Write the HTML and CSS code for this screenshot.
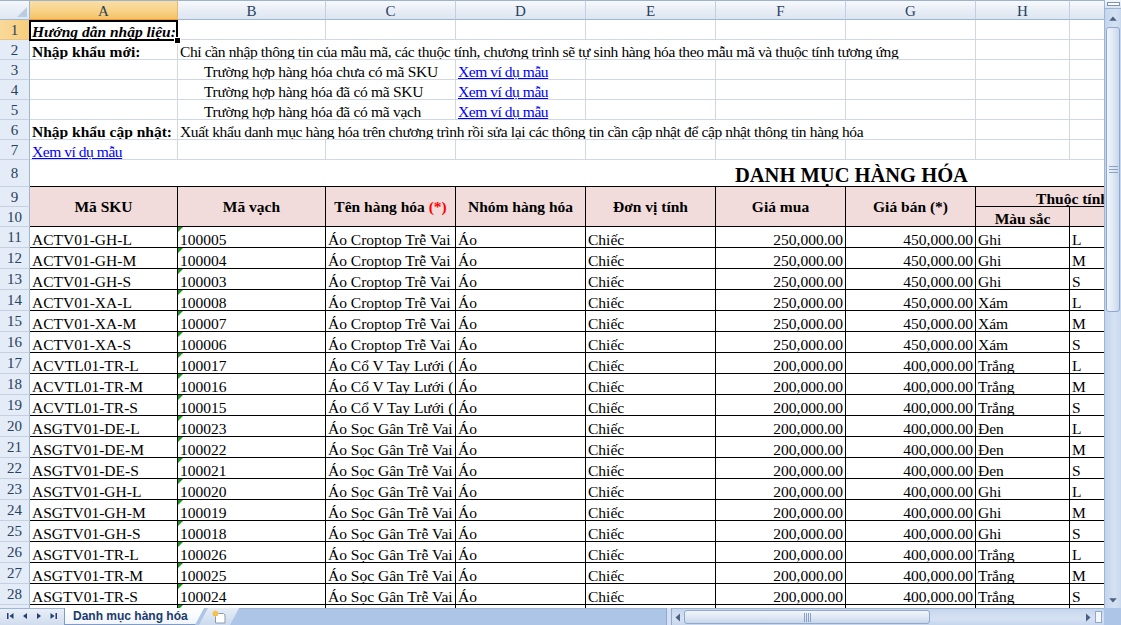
FILE: index.html
```html
<!DOCTYPE html>
<html lang="vi">
<head>
<meta charset="utf-8">
<title>Danh mục hàng hóa</title>
<link rel="stylesheet" href="styles.css">
</head>
<body>
<div class="app">
  <div class="viewport">
    <div class="sheet">
      <!-- column headers -->
      <div class="corner"><svg width="12" height="12" viewBox="0 0 12 12"><polygon points="12,2 12,12 2,12" fill="#bccbdf"/></svg></div>
      <div class="hd sel">A</div><div class="hd">B</div><div class="hd">C</div><div class="hd">D</div><div class="hd">E</div><div class="hd">F</div><div class="hd">G</div><div class="hd">H</div><div class="hd">I</div>

      <!-- row 1 -->
      <div class="rh sel">1</div><div class="c a1 bi">Hướng dẫn nhập liệu:</div><div class="c"></div><div class="c"></div><div class="c"></div><div class="c"></div><div class="c"></div><div class="c"></div><div class="c"></div><div class="c"></div>
      <!-- row 2 -->
      <div class="rh">2</div><div class="c b">Nhập khẩu mới:</div><div class="c span6 sq">Chỉ cần nhập thông tin của mẫu mã, các thuộc tính, chương trình sẽ tự sinh hàng hóa theo mẫu mã và thuộc tính tương ứng</div><div class="c"></div><div class="c"></div>
      <!-- row 3 -->
      <div class="rh">3</div><div class="c"></div><div class="c span2 ind">Trường hợp hàng hóa chưa có mã SKU</div><div class="c"><span class="link">Xem ví dụ mẫu</span></div><div class="c"></div><div class="c"></div><div class="c"></div><div class="c"></div><div class="c"></div>
      <!-- row 4 -->
      <div class="rh">4</div><div class="c"></div><div class="c span2 ind">Trường hợp hàng hóa đã có mã SKU</div><div class="c"><span class="link">Xem ví dụ mẫu</span></div><div class="c"></div><div class="c"></div><div class="c"></div><div class="c"></div><div class="c"></div>
      <!-- row 5 -->
      <div class="rh">5</div><div class="c"></div><div class="c span2 ind">Trường hợp hàng hóa đã có mã vạch</div><div class="c"><span class="link">Xem ví dụ mẫu</span></div><div class="c"></div><div class="c"></div><div class="c"></div><div class="c"></div><div class="c"></div>
      <!-- row 6 -->
      <div class="rh">6</div><div class="c b">Nhập khẩu cập nhật:</div><div class="c span6 sq">Xuất khẩu danh mục hàng hóa trên chương trình rồi sửa lại các thông tin cần cập nhật để cập nhật thông tin hàng hóa</div><div class="c"></div><div class="c"></div>
      <!-- row 7 -->
      <div class="rh">7</div><div class="c"><span class="link">Xem ví dụ mẫu</span></div><div class="c"></div><div class="c"></div><div class="c"></div><div class="c"></div><div class="c"></div><div class="c"></div><div class="c"></div><div class="c"></div>
      <!-- row 8 -->
      <div class="rh">8</div><div class="c title">DANH MỤC HÀNG HÓA</div>
      <!-- rows 9-10 -->
      <div class="rh">9</div>
      <div class="c th tall">Mã SKU</div>
      <div class="c th tall">Mã vạch</div>
      <div class="c th tall">Tên hàng hóa&nbsp;<span class="req">(*)</span></div>
      <div class="c th tall">Nhóm hàng hóa</div>
      <div class="c th tall">Đơn vị tính</div>
      <div class="c th tall">Giá mua</div>
      <div class="c th tall">Giá bán (*)</div>
      <div class="c th wide low">Thuộc tính</div>
      <div class="rh">10</div>
      <div class="c th low">Màu sắc</div>
      <div class="c th low"></div>

      <div class="rh">11</div><div class="c t">ACTV01-GH-L</div><div class="c t tx">100005</div><div class="c t">Áo Croptop Trễ Vai</div><div class="c t">Áo</div><div class="c t">Chiếc</div><div class="c t num">250,000.00</div><div class="c t num">450,000.00</div><div class="c t">Ghi</div><div class="c t">L</div>
      <div class="rh">12</div><div class="c t">ACTV01-GH-M</div><div class="c t tx">100004</div><div class="c t">Áo Croptop Trễ Vai</div><div class="c t">Áo</div><div class="c t">Chiếc</div><div class="c t num">250,000.00</div><div class="c t num">450,000.00</div><div class="c t">Ghi</div><div class="c t">M</div>
      <div class="rh">13</div><div class="c t">ACTV01-GH-S</div><div class="c t tx">100003</div><div class="c t">Áo Croptop Trễ Vai</div><div class="c t">Áo</div><div class="c t">Chiếc</div><div class="c t num">250,000.00</div><div class="c t num">450,000.00</div><div class="c t">Ghi</div><div class="c t">S</div>
      <div class="rh">14</div><div class="c t">ACTV01-XA-L</div><div class="c t tx">100008</div><div class="c t">Áo Croptop Trễ Vai</div><div class="c t">Áo</div><div class="c t">Chiếc</div><div class="c t num">250,000.00</div><div class="c t num">450,000.00</div><div class="c t">Xám</div><div class="c t">L</div>
      <div class="rh">15</div><div class="c t">ACTV01-XA-M</div><div class="c t tx">100007</div><div class="c t">Áo Croptop Trễ Vai</div><div class="c t">Áo</div><div class="c t">Chiếc</div><div class="c t num">250,000.00</div><div class="c t num">450,000.00</div><div class="c t">Xám</div><div class="c t">M</div>
      <div class="rh">16</div><div class="c t">ACTV01-XA-S</div><div class="c t tx">100006</div><div class="c t">Áo Croptop Trễ Vai</div><div class="c t">Áo</div><div class="c t">Chiếc</div><div class="c t num">250,000.00</div><div class="c t num">450,000.00</div><div class="c t">Xám</div><div class="c t">S</div>
      <div class="rh">17</div><div class="c t">ACVTL01-TR-L</div><div class="c t tx">100017</div><div class="c t">Áo Cổ V Tay Lưới (</div><div class="c t">Áo</div><div class="c t">Chiếc</div><div class="c t num">200,000.00</div><div class="c t num">400,000.00</div><div class="c t">Trắng</div><div class="c t">L</div>
      <div class="rh">18</div><div class="c t">ACVTL01-TR-M</div><div class="c t tx">100016</div><div class="c t">Áo Cổ V Tay Lưới (</div><div class="c t">Áo</div><div class="c t">Chiếc</div><div class="c t num">200,000.00</div><div class="c t num">400,000.00</div><div class="c t">Trắng</div><div class="c t">M</div>
      <div class="rh">19</div><div class="c t">ACVTL01-TR-S</div><div class="c t tx">100015</div><div class="c t">Áo Cổ V Tay Lưới (</div><div class="c t">Áo</div><div class="c t">Chiếc</div><div class="c t num">200,000.00</div><div class="c t num">400,000.00</div><div class="c t">Trắng</div><div class="c t">S</div>
      <div class="rh">20</div><div class="c t">ASGTV01-DE-L</div><div class="c t tx">100023</div><div class="c t">Áo Sọc Gân Trễ Vai</div><div class="c t">Áo</div><div class="c t">Chiếc</div><div class="c t num">200,000.00</div><div class="c t num">400,000.00</div><div class="c t">Đen</div><div class="c t">L</div>
      <div class="rh">21</div><div class="c t">ASGTV01-DE-M</div><div class="c t tx">100022</div><div class="c t">Áo Sọc Gân Trễ Vai</div><div class="c t">Áo</div><div class="c t">Chiếc</div><div class="c t num">200,000.00</div><div class="c t num">400,000.00</div><div class="c t">Đen</div><div class="c t">M</div>
      <div class="rh">22</div><div class="c t">ASGTV01-DE-S</div><div class="c t tx">100021</div><div class="c t">Áo Sọc Gân Trễ Vai</div><div class="c t">Áo</div><div class="c t">Chiếc</div><div class="c t num">200,000.00</div><div class="c t num">400,000.00</div><div class="c t">Đen</div><div class="c t">S</div>
      <div class="rh">23</div><div class="c t">ASGTV01-GH-L</div><div class="c t tx">100020</div><div class="c t">Áo Sọc Gân Trễ Vai</div><div class="c t">Áo</div><div class="c t">Chiếc</div><div class="c t num">200,000.00</div><div class="c t num">400,000.00</div><div class="c t">Ghi</div><div class="c t">L</div>
      <div class="rh">24</div><div class="c t">ASGTV01-GH-M</div><div class="c t tx">100019</div><div class="c t">Áo Sọc Gân Trễ Vai</div><div class="c t">Áo</div><div class="c t">Chiếc</div><div class="c t num">200,000.00</div><div class="c t num">400,000.00</div><div class="c t">Ghi</div><div class="c t">M</div>
      <div class="rh">25</div><div class="c t">ASGTV01-GH-S</div><div class="c t tx">100018</div><div class="c t">Áo Sọc Gân Trễ Vai</div><div class="c t">Áo</div><div class="c t">Chiếc</div><div class="c t num">200,000.00</div><div class="c t num">400,000.00</div><div class="c t">Ghi</div><div class="c t">S</div>
      <div class="rh">26</div><div class="c t">ASGTV01-TR-L</div><div class="c t tx">100026</div><div class="c t">Áo Sọc Gân Trễ Vai</div><div class="c t">Áo</div><div class="c t">Chiếc</div><div class="c t num">200,000.00</div><div class="c t num">400,000.00</div><div class="c t">Trắng</div><div class="c t">L</div>
      <div class="rh">27</div><div class="c t">ASGTV01-TR-M</div><div class="c t tx">100025</div><div class="c t">Áo Sọc Gân Trễ Vai</div><div class="c t">Áo</div><div class="c t">Chiếc</div><div class="c t num">200,000.00</div><div class="c t num">400,000.00</div><div class="c t">Trắng</div><div class="c t">M</div>
      <div class="rh">28</div><div class="c t">ASGTV01-TR-S</div><div class="c t tx">100024</div><div class="c t">Áo Sọc Gân Trễ Vai</div><div class="c t">Áo</div><div class="c t">Chiếc</div><div class="c t num">200,000.00</div><div class="c t num">400,000.00</div><div class="c t">Trắng</div><div class="c t">S</div>
      <div class="rh"></div><div class="c t"></div><div class="c t tx"></div><div class="c t"></div><div class="c t"></div><div class="c t"></div><div class="c t"></div><div class="c t"></div><div class="c t"></div><div class="c t"></div>
    </div>
  </div>

  <div class="vscroll">
    <div class="vsplit"><span></span></div>
    <div class="varrow"><svg width="17" height="17" viewBox="0 0 17 17"><polygon points="4.5,11 12.5,11 8.5,6.5" fill="#4a5f82"/></svg></div>
    <div class="vthumb"><svg width="9" height="7" viewBox="0 0 9 7"><rect x="0" y="0" width="9" height="1" fill="#8ca2c4"/><rect x="0" y="3" width="9" height="1" fill="#8ca2c4"/><rect x="0" y="6" width="9" height="1" fill="#8ca2c4"/></svg></div>
    <div class="vtrack"></div>
    <div class="varrow down"><svg width="17" height="14" viewBox="0 0 17 14"><polygon points="4.5,4 12.5,4 8.5,8.5" fill="#4a5f82"/></svg></div>
  </div>

  <div class="bottombar">
    <div class="nav">
      <svg width="64" height="17" viewBox="0 0 64 17">
        <rect x="7" y="5" width="1.5" height="6" fill="#243e6e"/>
        <polygon points="13.5,5 9.5,8 13.5,11" fill="#243e6e"/>
        <polygon points="27,5 23,8 27,11" fill="#243e6e"/>
        <polygon points="37,5 41,8 37,11" fill="#243e6e"/>
        <polygon points="50.5,5 54.5,8 50.5,11" fill="#243e6e"/>
        <rect x="55.5" y="5" width="1.5" height="6" fill="#243e6e"/>
      </svg>
    </div>
    <div class="tab active">Danh mục hàng hóa</div>
    <div class="tab newtab">
      <svg width="16" height="14" viewBox="0 0 16 14">
        <path d="M4.5 3.5h8l1.5 1.5v8h-9.5z" fill="#ffffff" stroke="#8a9ab2"/>
        <circle cx="4.5" cy="3.5" r="2.6" fill="#f2b233"/>
        <path d="M4.5 0.2v6.6M1.2 3.5h6.6M2.2 1.2l4.6 4.6M6.8 1.2l-4.6 4.6" stroke="#f7c64e" stroke-width="0.8"/>
      </svg>
    </div>
    <div class="tabspace"></div>
    <div class="hsplit"></div>
    <div class="hscroll">
      <div class="harrow"><svg width="12" height="17" viewBox="0 0 12 17"><polygon points="8,4.5 8,12.5 3.5,8.5" fill="#4a5f82"/></svg></div>
      <div class="hthumb"><svg width="7" height="9" viewBox="0 0 7 9"><rect x="0" y="0" width="1" height="9" fill="#8ca2c4"/><rect x="2" y="0" width="1" height="9" fill="#8ca2c4"/><rect x="4" y="0" width="1" height="9" fill="#8ca2c4"/><rect x="6" y="0" width="1" height="9" fill="#8ca2c4"/></svg></div>
      <div class="htrack"></div>
      <div class="harrow"><svg width="12" height="17" viewBox="0 0 12 17"><polygon points="4,4.5 4,12.5 8.5,8.5" fill="#4a5f82"/></svg></div>
      <div class="hbox"></div>
    </div>
    <div class="hcorner"></div>
  </div>
</div>
</body>
</html>
```

FILE: styles.css
```css
html, body {
  margin: 0;
  padding: 0;
  background: #ffffff;
}

.app {
  width: 1121px;
  height: 625px;
  display: grid;
  grid-template-columns: 1104px 17px;
  grid-template-rows: 608px 17px;
  overflow: hidden;
  background: #ffffff;
}

.viewport {
  overflow: hidden;
  position: relative;
}

.sheet {
  display: grid;
  grid-template-columns: 30px 148px 148px 130px 130px 130px 130px 130px 94px 100px;
  grid-template-rows: 20px repeat(7, 20px) 27px 20px 20px repeat(19, 21px);
  width: 1170px;
  font-family: "Liberation Serif", "Times New Roman", serif;
  font-size: 15.5px;
  color: #000000;
}

/* header cells */
.corner {
  box-sizing: border-box;
  border-top: 1px solid #9fb2cc;
  border-right: 1px solid #9eb6ce;
  border-bottom: 1px solid #9eb6ce;
  background: linear-gradient(#f4f7fb, #dfe7f2);
  display: flex;
  align-items: flex-end;
  justify-content: flex-end;
  padding: 0 2px 2px 0;
}

.hd {
  box-sizing: border-box;
  border-top: 1px solid #9fb2cc;
  border-right: 1px solid #c2cfe0;
  border-bottom: 1px solid #9eb6ce;
  background: linear-gradient(#f7f9fc 0%, #e9eef6 50%, #dde6f2 100%);
  color: #27415f;
  font-size: 15px;
  display: flex;
  align-items: center;
  justify-content: center;
  line-height: 16px;
  padding-top: 1px;
}

.rh {
  box-sizing: border-box;
  border-right: 1px solid #9eb6ce;
  border-bottom: 1px solid #c5d1e1;
  background: #e4ecf7;
  color: #27415f;
  font-size: 15px;
  display: flex;
  align-items: center;
  justify-content: center;
  line-height: 16px;
  overflow: hidden;
}

.hd.sel {
  background: linear-gradient(#f9dea6 0%, #f8d48a 50%, #f3c366 100%);
  border-bottom-color: #f29436;
  border-right-color: #e8b86a;
}

.rh.sel {
  background: linear-gradient(90deg, #f9d99a, #f6cd7b);
  border-right-color: #f29436;
  border-bottom-color: #e8c285;
}

/* body cells */
.c {
  box-sizing: border-box;
  border-right: 1px solid #d0d7e5;
  border-bottom: 1px solid #d0d7e5;
  overflow: hidden;
  white-space: nowrap;
  display: flex;
  align-items: flex-end;
  padding: 0 2px;
  line-height: 15px;
  min-width: 0;
}

.b { font-weight: bold; }
.bi { font-weight: bold; font-style: italic; }

.span6 { grid-column: span 6; }
.span2 { grid-column: span 2; }
.ind { padding-left: 26px; letter-spacing: -0.3px; }
.sq { letter-spacing: -0.37px; }

.link {
  color: #0000ff;
  text-decoration: underline;
  letter-spacing: -0.45px;
}

.a1 {
  position: relative;
  overflow: visible;
  z-index: 3;
}
.a1::after {
  content: "";
  position: absolute;
  left: -1px;
  top: 0;
  right: -1px;
  bottom: -2px;
  border: 2px solid #000000;
  pointer-events: none;
}
.a1::before {
  content: "";
  position: absolute;
  right: -4px;
  bottom: -5px;
  width: 5px;
  height: 5px;
  background: #000000;
  border: 1px solid #ffffff;
  z-index: 2;
}

.title {
  grid-column: span 9;
  font-size: 20.5px;
  font-weight: bold;
  line-height: 20px;
  padding-left: 705px;
  padding-bottom: 1px;
  border-right: none;
  border-bottom-color: #000000;
}

.th {
  background: #f2dcdb;
  font-weight: bold;
  justify-content: center;
  align-items: center;
  border-right-color: #000000;
  border-bottom-color: #000000;
}
.th.tall { grid-row: span 2; }
.th.wide { grid-column: span 2; }
.th.low { align-items: flex-end; }
.req { color: #ff0000; }

.t {
  border-right-color: #000000;
  border-bottom-color: #000000;
}
.num { justify-content: flex-end; }
.tx { position: relative; }
.tx::before {
  content: "";
  position: absolute;
  left: 0;
  top: 0;
  width: 0;
  height: 0;
  border-top: 5px solid #1d9a1d;
  border-right: 5px solid transparent;
}

/* vertical scrollbar */
.vscroll {
  display: flex;
  flex-direction: column;
  box-sizing: border-box;
  border-left: 1px solid #9fb5d5;
  background: linear-gradient(90deg, #c3d4ec, #d5e2f3 60%, #c9d8ee);
}
.vsplit {
  height: 9px;
  display: flex;
  align-items: center;
  justify-content: center;
  background: linear-gradient(#f3f6fb, #d9e3f1);
  border-bottom: 1px solid #9fb5d5;
  box-sizing: border-box;
}
.vsplit span {
  width: 11px;
  height: 2px;
  border: 1px solid #7c93b7;
  background: #ffffff;
}
.varrow {
  height: 18px;
  display: flex;
  align-items: center;
  justify-content: center;
}
.varrow.down { height: 14px; }
.vthumb {
  height: 285px;
  margin: 0 1px;
  box-sizing: border-box;
  border: 1px solid #8fa8cc;
  border-radius: 3px;
  background: linear-gradient(90deg, #f1f5fb, #dfe8f5 50%, #c9d7ec);
  display: flex;
  align-items: center;
  justify-content: center;
}
.vtrack { flex: 1; }

/* bottom bar */
.bottombar {
  grid-column: 1 / span 2;
  display: flex;
  height: 17px;
  background: #adc5e7;
  font-family: "Liberation Sans", Arial, sans-serif;
}
.nav {
  width: 64px;
  flex: none;
  background: linear-gradient(#e9eff8, #d0dcee);
  border-top: 1px solid #9fb5d5;
  box-sizing: border-box;
}
.nav svg { display: block; margin-top: -1px; }
.tab {
  flex: none;
  box-sizing: border-box;
  display: flex;
  align-items: center;
}
.tab.active {
  width: 140px;
  padding-left: 8px;
  background: linear-gradient(#ffffff, #f1f5fb);
  color: #1b3a6e;
  font-weight: bold;
  font-size: 12px;
  border-left: 1px solid #7f9cc9;
  border-bottom: 1px solid #7f9cc9;
  clip-path: polygon(0 0, 100% 0, calc(100% - 9px) 100%, 0 100%);
}
.tab.newtab {
  width: 40px;
  margin-left: -5px;
  justify-content: center;
  background: linear-gradient(#e6edf7, #ccdaee);
  clip-path: polygon(0 100%, 9px 0, 100% 0, calc(100% - 9px) 100%);
}
.tabspace {
  flex: 1;
  border-top: 1px solid #9fb5d5;
  box-sizing: border-box;
}
.hsplit {
  width: 4px;
  flex: none;
  background: #d5e1f1;
  border-left: 1px solid #8fa8cc;
  border-right: 1px solid #8fa8cc;
}
.hscroll {
  width: 432px;
  flex: none;
  display: flex;
  box-sizing: border-box;
  border-top: 1px solid #9fb5d5;
  background: linear-gradient(#c6d6ed, #d6e2f3 60%, #c6d6ed);
}
.harrow {
  width: 12px;
  display: flex;
  align-items: center;
  justify-content: center;
}
.hthumb {
  width: 246px;
  margin: 1px 0;
  box-sizing: border-box;
  border: 1px solid #8fa8cc;
  border-radius: 3px;
  background: linear-gradient(#f3f6fb, #dfe8f5 50%, #c9d7ec);
  display: flex;
  align-items: center;
  justify-content: center;
}
.htrack { flex: 1; }
.hbox {
  width: 5px;
  margin: 2px 2px 2px 1px;
  background: #f4f7fb;
  border: 1px solid #8fa8cc;
}
.hcorner {
  width: 17px;
  flex: none;
  background: #adc5e7;
}
```
